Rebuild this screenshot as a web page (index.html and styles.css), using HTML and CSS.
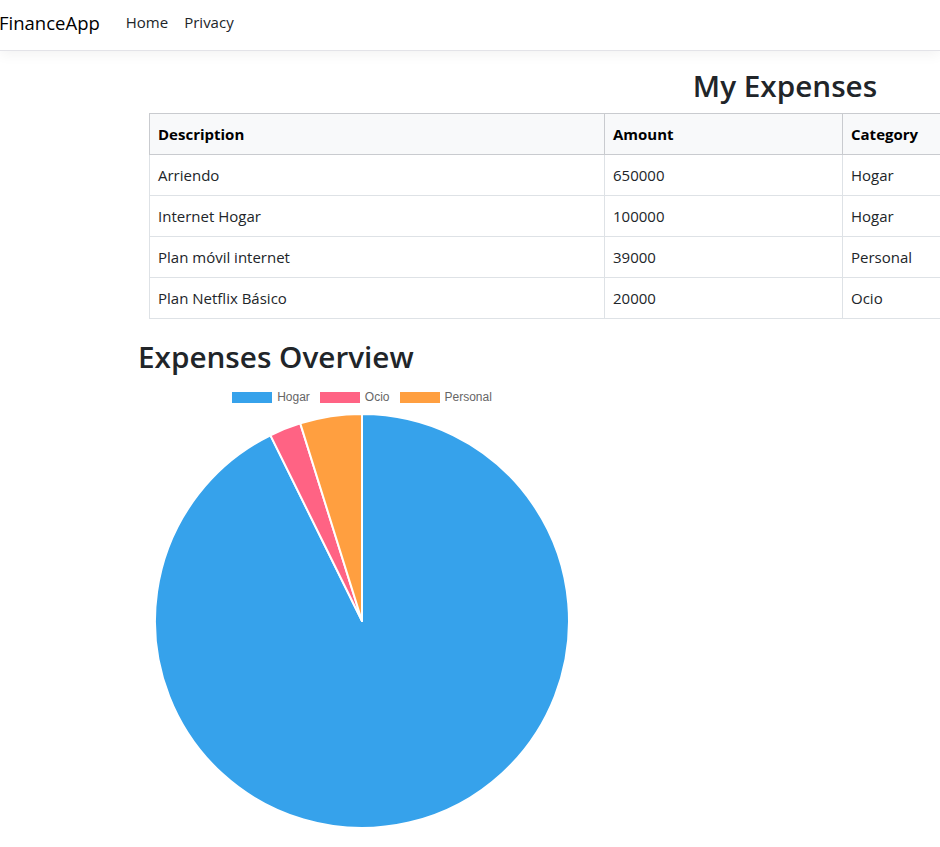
FILE: index.html
```html
<!DOCTYPE html>
<html lang="es">
<head>
<meta charset="utf-8">
<title>FinanceApp</title>
<link rel="stylesheet" href="styles.css">
</head>
<body>
<header class="navbar">
  <a class="brand" href="#">FinanceApp</a>
  <nav class="nav">
    <a class="nav-link" href="#">Home</a>
    <a class="nav-link" href="#">Privacy</a>
  </nav>
</header>
<main class="main">
  <section class="expenses">
    <h1 class="title-center">My Expenses</h1>
    <table class="table">
      <thead>
        <tr><th class="col-desc">Description</th><th class="col-amount">Amount</th><th class="col-cat">Category</th></tr>
      </thead>
      <tbody>
        <tr><td>Arriendo</td><td>650000</td><td>Hogar</td></tr>
        <tr><td>Internet Hogar</td><td>100000</td><td>Hogar</td></tr>
        <tr><td>Plan móvil internet</td><td>39000</td><td>Personal</td></tr>
        <tr><td>Plan Netflix Básico</td><td>20000</td><td>Ocio</td></tr>
      </tbody>
    </table>
  </section>
  <h2 class="title">Expenses Overview</h2>
  <div class="chart">
    <ul class="legend">
      <li class="legend-item"><span class="swatch swatch-blue"></span>Hogar</li>
      <li class="legend-item"><span class="swatch swatch-pink"></span>Ocio</li>
      <li class="legend-item"><span class="swatch swatch-orange"></span>Personal</li>
    </ul>
    <svg class="pie" width="448" height="420" viewBox="138 412 448 420">
      <path d="M362,622 L362,415 A207,207 0 1 1 270.45,436.34 Z" fill="#36a2eb" stroke="#fff" stroke-width="2" stroke-linejoin="round"/>
      <path d="M362,622 L270.45,436.34 A207,207 0 0 1 300.26,424.42 Z" fill="#ff6384" stroke="#fff" stroke-width="2" stroke-linejoin="round"/>
      <path d="M362,622 L300.26,424.42 A207,207 0 0 1 362,415 Z" fill="#ff9f40" stroke="#fff" stroke-width="2" stroke-linejoin="round"/>
    </svg>
  </div>
</main>
</body>
</html>
```
FILE: styles.css
```css
html, body {
  overflow: hidden;
}
body {
  margin: 0;
  font-family: "Open Sans", "Noto Sans", sans-serif;
  font-size: 15px;
  color: #212529;
  background: #fff;
}
.navbar {
  display: flex;
  align-items: center;
  height: 50px;
  border-bottom: 1px solid #e3e3e8;
  box-shadow: 0 4px 12px rgba(0, 0, 0, 0.05);
  padding-left: 0;
}
.brand {
  font-size: 18.5px;
  color: #000;
  text-decoration: none;
  margin-left: -1px;
  margin-right: 18px;
  margin-top: -6px;
}
.nav {
  display: flex;
  margin-top: -6px;
}
.nav-link {
  color: #212529;
  text-decoration: none;
  padding: 0 8px;
  font-size: 15px;
}
.main {
  padding-left: 138px;
}
.expenses {
  margin-left: 11px;
  width: 1272px;
}
.title-center,
.title {
  font-size: 29.7px;
  font-weight: 600;
  line-height: 38px;
  margin: 0 0 8px;
}
.title-center {
  text-align: center;
  margin-top: 16px;
}
.title {
  margin-top: 19px;
  margin-bottom: 8px;
}
.table {
  border-collapse: collapse;
  width: 100%;
  table-layout: fixed;
}
.table th,
.table td {
  border: 1px solid #dee2e6;
  padding: 8px;
  line-height: 24px;
  text-align: left;
  font-size: 15px;
}
.table thead th {
  background: #f8f9fa;
  font-weight: 700;
  color: #000;
  border-color: #c9cbcf;
}
.col-desc { width: 438px; }
.col-amount { width: 221px; }
.chart {
  width: 448px;
}
.legend {
  list-style: none;
  margin: 0;
  padding: 6px 0 0;
  display: flex;
  justify-content: center;
  gap: 10px;
  font-family: "Liberation Sans", Arial, sans-serif;
  font-size: 12px;
  color: #666;
  line-height: 14px;
  height: 20px;
}
.legend-item {
  display: flex;
  align-items: center;
  gap: 5px;
  height: 14px;
}
.swatch {
  display: inline-block;
  width: 40px;
  height: 11px;
}
.swatch-blue { background: #36a2eb; }
.swatch-pink { background: #ff6384; }
.swatch-orange { background: #ff9f40; }
.pie {
  display: block;
  margin-top: 1px;
}
```
